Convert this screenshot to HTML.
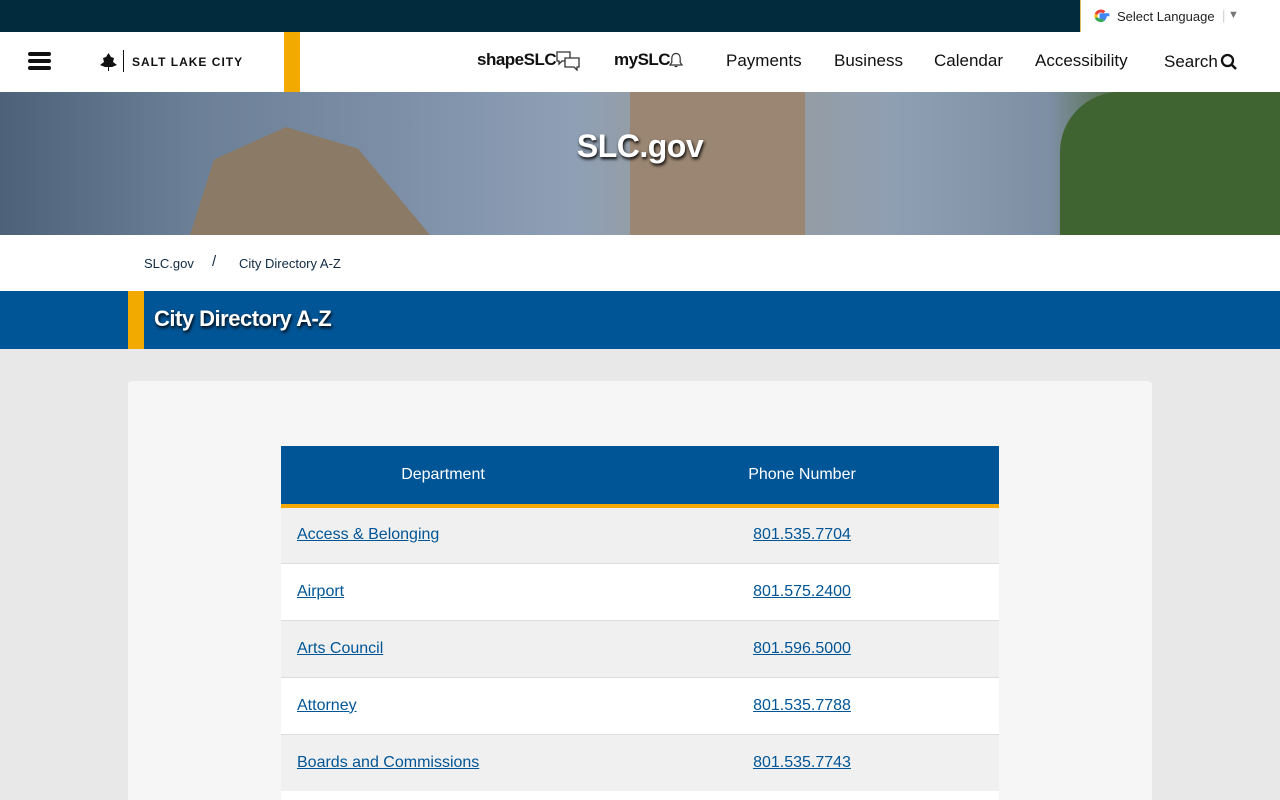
<!DOCTYPE html>
<html><head><meta charset="utf-8"><style>
*{margin:0;padding:0;box-sizing:border-box}
html,body{width:1280px;height:800px;overflow:hidden}
body{font-family:"Liberation Sans",sans-serif;background:#e8e8e8;position:relative}
.top{position:absolute;left:0;top:0;width:1280px;height:32px;background:#022b3e}
.lang{position:absolute;left:1080px;top:0;width:200px;height:32px;background:#fff;border-left:1px solid #e0c060;font-size:13px;color:#222}
.nav{position:absolute;top:32px;left:0;width:1280px;height:60px;background:#fff}
.nav span{position:absolute;top:19px;font-size:17px;color:#111}
.hero{position:absolute;top:92px;left:0;width:1280px;height:143px;background:linear-gradient(90deg,#4d6178 0%,#6b7f96 15%,#7b8ea6 30%,#8fa0b6 45%,#9a9a94 55%,#8f9fb3 70%,#7d8fa4 82%,#4f6a3a 88%,#3d5a2c 100%)}
.bc{position:absolute;top:235px;left:0;width:1280px;height:56px;background:#fff;font-size:13px;color:#102a43}
.band{position:absolute;top:291px;left:0;width:1280px;height:58px;background:#005596}
.card{position:absolute;top:381px;left:128px;width:1024px;height:419px;background:#f6f6f6;border-radius:4px 4px 0 0}
table{position:absolute;left:281px;top:446px;width:718px;border-collapse:collapse;font-size:16px}
th{background:#005596;color:#fff;font-weight:normal;height:60px;border-bottom:4px solid #f2a900;padding-top:0}
td{height:57px;border-bottom:1px solid #ddd}
tr:nth-child(even) td{background:#f0f0f0}tr:nth-child(odd) td{background:#fff}
td a{color:#005596;text-decoration:underline}
</style></head><body>
<div class="top"></div>
<div class="lang"><svg style="position:absolute;left:11px;top:7px" width="18" height="18" viewBox="0 0 18 18"><path d="M16 9.2c0-.6 0-1-.1-1.5H9v2.8h4a3.5 3.5 0 0 1-1.5 2.2" stroke="#4285f4" stroke-width="3" fill="none"/><path d="M11.5 12.7A5 5 0 0 1 4.2 10.6" stroke="#34a853" stroke-width="3" fill="none"/><path d="M4.2 10.6a5 5 0 0 1 0-3.3" stroke="#fbbc05" stroke-width="3" fill="none"/><path d="M4.2 7.3A5 5 0 0 1 12.3 5.4" stroke="#ea4335" stroke-width="3" fill="none"/></svg><span style="position:absolute;left:36px;top:9px">Select Language</span><span style="position:absolute;left:141px;top:8px;color:#ccc">|</span><span style="position:absolute;left:147px;top:9px;color:#777;font-size:11px">▼</span></div>
<div class="nav">
<div style="position:absolute;left:28px;top:20px;width:23px;height:4px;background:#111;border-radius:2px;box-shadow:0 7px 0 #111,0 14px 0 #111"></div>
<svg style="position:absolute;left:100px;top:21px" width="17" height="18" viewBox="0 0 17 18"><path d="M8.5 0L11 4 14 5 13 9 17 12 12 14H9v4H8v-4H5L0 12 4 9 3 5 6 4z" fill="#111"/></svg>
<div style="position:absolute;left:123px;top:18px;width:1px;height:22px;background:#111"></div>
<span style="left:132px;top:23px;font-size:12px;font-weight:bold;letter-spacing:1px">SALT LAKE CITY</span>
<div style="position:absolute;left:284px;top:0;width:16px;height:60px;background:#f2a900"></div>
<span style="left:477px;top:18px;font-weight:bold;letter-spacing:-0.5px">shapeSLC</span>
<svg style="position:absolute;left:556px;top:19px" width="25" height="20" viewBox="0 0 25 20"><path d="M1 1h13v9H6l-3 3v-3H1z" fill="none" stroke="#333" stroke-width="1.3"/><path d="M9 7h14v9h-2v3l-3-3H9z" fill="#fff" stroke="#333" stroke-width="1.3"/></svg>
<span style="left:614px;top:18px;font-weight:bold;letter-spacing:-0.5px">mySLC</span>
<svg style="position:absolute;left:669px;top:20px" width="14" height="17" viewBox="0 0 14 17"><path d="M7 1.5c-3 0-4.2 2.5-4.2 5v4L1 13h12l-1.8-2.5v-4c0-2.5-1.2-5-4.2-5zM5.5 14.5h3" fill="none" stroke="#333" stroke-width="1.2"/></svg>
<span style="left:726px">Payments</span><span style="left:834px">Business</span><span style="left:934px">Calendar</span><span style="left:1035px">Accessibility</span><span style="left:1164px;top:20px">Search</span>
<svg style="position:absolute;left:1220px;top:21px" width="18" height="18" viewBox="0 0 18 18"><circle cx="7.5" cy="7.5" r="5.5" stroke="#111" stroke-width="2.3" fill="none"/><path d="M11.5 11.5L16 16" stroke="#111" stroke-width="2.5"/></svg>
</div>
<div class="hero"><div style="position:absolute;left:190px;top:35px;width:240px;height:108px;background:#8a7a66;clip-path:polygon(0 100%,10% 30%,40% 0,70% 20%,100% 100%)"></div><div style="position:absolute;left:630px;top:0;width:175px;height:143px;background:#9a8672"></div><div style="position:absolute;left:1060px;top:0;width:220px;height:143px;background:#3f6432;border-radius:60px 0 0 0"></div><div style="position:absolute;width:100%;top:36px;text-align:center;color:#fff;font-size:32px;font-weight:bold;letter-spacing:-0.5px;text-shadow:1px 2px 3px #000">SLC.gov</div></div>
<div class="bc"><span style="position:absolute;left:144px;top:21px">SLC.gov</span><span style="position:absolute;left:212px;top:18px;font-size:15px">/</span><span style="position:absolute;left:239px;top:21px">City Directory A-Z</span></div>
<div class="band"><div style="position:absolute;left:128px;top:0;width:16px;height:58px;background:#f2a900"></div><span style="position:absolute;left:154px;top:15px;color:#fff;font-size:22px;font-weight:bold;letter-spacing:-0.5px;text-shadow:1px 2px 3px #000">City Directory A-Z</span></div>
<div class="card"></div>
<table><tr><th style="width:324px">Department</th><th>Phone Number</th></tr>
<tr><td style="padding-left:16px"><a>Access &amp; Belonging</a></td><td style="text-align:center"><a>801.535.7704</a></td></tr>
<tr><td style="padding-left:16px"><a>Airport</a></td><td style="text-align:center"><a>801.575.2400</a></td></tr>
<tr><td style="padding-left:16px"><a>Arts Council</a></td><td style="text-align:center"><a>801.596.5000</a></td></tr>
<tr><td style="padding-left:16px"><a>Attorney</a></td><td style="text-align:center"><a>801.535.7788</a></td></tr>
<tr><td style="padding-left:16px"><a>Boards and Commissions</a></td><td style="text-align:center"><a>801.535.7743</a></td></tr>
</table>
<div style="position:absolute;left:281px;top:791px;width:718px;height:9px;background:#fff"></div>
</body></html>
